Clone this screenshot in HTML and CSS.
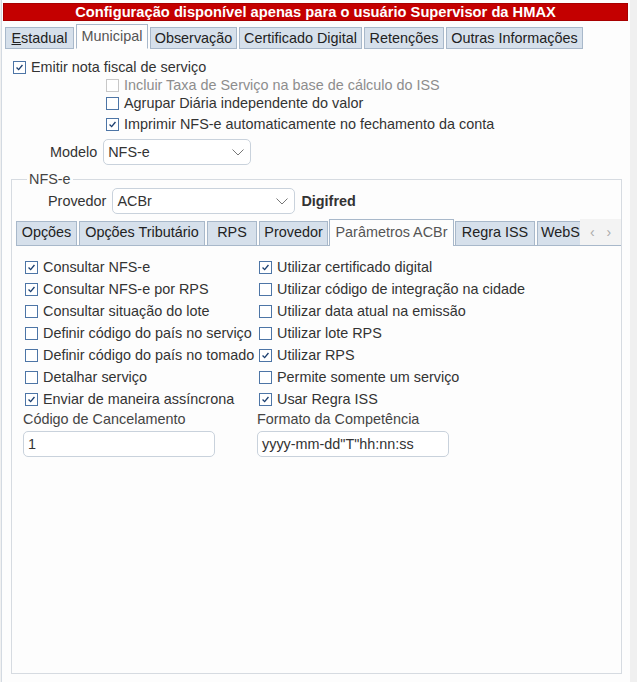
FILE: index.html
```html
<!DOCTYPE html>
<html lang="pt-BR">
<head>
<meta charset="utf-8">
<title>Configuração</title>
<link rel="stylesheet" href="styles.css">
</head>
<body>
<div class="app">
  <div class="panel">
    <div class="banner">Configuração disponível apenas para o usuário Supervisor da HMAX</div>
    <div class="tabs">
      <div class="tab t-est"><u>E</u>stadual</div>
      <div class="tab active t-mun">Municipal</div>
      <div class="tab t-obs">Observação</div>
      <div class="tab t-cert">Certificado Digital</div>
      <div class="tab t-ret">Retenções</div>
      <div class="tab t-out">Outras Informações</div>
    </div>
    <div class="page">
      <label class="chk row-emitir"><span class="box on"><svg viewBox="0 0 13 13"><path d="M3 6.5 L5.5 9 L10 3.5" /></svg></span>Emitir nota fiscal de serviço</label>
      <div class="sub">
        <label class="chk disabled"><span class="box"></span>Incluir Taxa de Serviço na base de cálculo do ISS</label>
        <label class="chk"><span class="box"></span>Agrupar Diária independente do valor</label>
        <label class="chk row-imprimir"><span class="box on"><svg viewBox="0 0 13 13"><path d="M3 6.5 L5.5 9 L10 3.5" /></svg></span>Imprimir NFS-e automaticamente no fechamento da conta</label>
      </div>
      <div class="modelo">
        <span class="lbl">Modelo</span>
        <div class="select sel-modelo"><span>NFS-e</span><svg class="chev" viewBox="0 0 12 7"><path d="M0.5 0.5 L6 6 L11.5 0.5" /></svg></div>
      </div>
      <fieldset class="group">
        <legend>NFS-e</legend>
        <div class="provedor">
          <span class="lbl">Provedor</span>
          <div class="select sel-prov"><span>ACBr</span><svg class="chev" viewBox="0 0 12 7"><path d="M0.5 0.5 L6 6 L11.5 0.5" /></svg></div>
          <b class="digi">Digifred</b>
        </div>
        <div class="itabs">
          <div class="itab i-op">Opções</div>
          <div class="itab i-trib">Opções Tributário</div>
          <div class="itab i-rps">RPS</div>
          <div class="itab i-prov">Provedor</div>
          <div class="itab active i-par">Parâmetros ACBr</div>
          <div class="itab i-reg">Regra ISS</div>
          <div class="itab clipped">WebS</div>
          <div class="arrows"><span>‹</span><span>›</span></div>
        </div>
        <div class="grid">
          <label class="chk"><span class="box on"><svg viewBox="0 0 13 13"><path d="M3 6.5 L5.5 9 L10 3.5" /></svg></span>Consultar NFS-e</label>
          <label class="chk"><span class="box on"><svg viewBox="0 0 13 13"><path d="M3 6.5 L5.5 9 L10 3.5" /></svg></span>Utilizar certificado digital</label>
          <label class="chk"><span class="box on"><svg viewBox="0 0 13 13"><path d="M3 6.5 L5.5 9 L10 3.5" /></svg></span>Consultar NFS-e por RPS</label>
          <label class="chk"><span class="box"></span>Utilizar código de integração na cidade</label>
          <label class="chk"><span class="box"></span>Consultar situação do lote</label>
          <label class="chk"><span class="box"></span>Utilizar data atual na emissão</label>
          <label class="chk"><span class="box"></span>Definir código do país no serviço</label>
          <label class="chk"><span class="box"></span>Utilizar lote RPS</label>
          <label class="chk"><span class="box"></span>Definir código do país no tomado</label>
          <label class="chk"><span class="box on"><svg viewBox="0 0 13 13"><path d="M3 6.5 L5.5 9 L10 3.5" /></svg></span>Utilizar RPS</label>
          <label class="chk"><span class="box"></span>Detalhar serviço</label>
          <label class="chk"><span class="box"></span>Permite somente um serviço</label>
          <label class="chk"><span class="box on"><svg viewBox="0 0 13 13"><path d="M3 6.5 L5.5 9 L10 3.5" /></svg></span>Enviar de maneira assíncrona</label>
          <label class="chk"><span class="box on"><svg viewBox="0 0 13 13"><path d="M3 6.5 L5.5 9 L10 3.5" /></svg></span>Usar Regra ISS</label>
        </div>
        <div class="fields">
          <div class="field">
            <div class="flbl">Código de Cancelamento</div>
            <div class="input">1</div>
          </div>
          <div class="field">
            <div class="flbl">Formato da Competência</div>
            <div class="input">yyyy-mm-dd"T"hh:nn:ss</div>
          </div>
        </div>
      </fieldset>
    </div>
  </div>
  <div class="side"></div>
</div>
</body>
</html>
```

FILE: styles.css
```css
* { box-sizing: border-box; }
html, body { margin: 0; padding: 0; }
body {
  font-family: "Liberation Sans", Arial, sans-serif;
  font-size: 14.4px;
  color: #333;
  background: #f0f0f0;
}
.app {
  display: flex;
  width: 637px;
  height: 682px;
  overflow: hidden;
}
.panel {
  margin-left: 1px;
  width: 629px;
  height: 682px;
  border-left: 1px solid #d3dae2;
  padding: 3px 2px 0 1px;
  background: #fdfdfd;
  display: flex;
  flex-direction: column;
}
.side { flex: 1; background: #f0f0f0; }

.banner {
  height: 18px;
  background: #c40000;
  color: #fff;
  font-weight: bold;
  font-size: 14.7px;
  text-align: center;
  line-height: 17px;
  border: 1px solid #a80000;
  white-space: nowrap;
}

.tabs {
  display: flex;
  align-items: flex-end;
  gap: 2px;
  margin-top: 3px;
  padding-left: 2px;
  height: 25px;
}
.tab {
  height: 22px;
  line-height: 20px;
  text-align: center;
  background: #d6e0eb;
  border: 1px solid #a8b8ca;
  color: #222;
  white-space: nowrap;
}
.tab.active {
  height: 25px;
  line-height: 22px;
  background: #fdfdfd;
  border-bottom-color: #fdfdfd;
  color: #555;
}
.t-est { width: 69px; }
.t-mun { width: 72px; }
.t-obs { width: 87px; }
.t-cert { width: 123px; }
.t-ret { width: 80px; }
.t-out { width: 137px; }

.page {
  flex: 1;
  display: flex;
  flex-direction: column;
}

.chk {
  display: flex;
  align-items: center;
  height: 18px;
  white-space: nowrap;
}
.box {
  width: 13px;
  height: 13px;
  border: 1px solid #4d75a6;
  background: #fff;
  margin-right: 5px;
  flex: none;
  display: flex;
}
.box svg { width: 11px; height: 11px; }
.box svg path { fill: none; stroke: #1c3f70; stroke-width: 1.6; }
.chk.disabled { color: #8d8d8d; }
.chk.disabled .box { border-color: #c8c8c8; }

.row-emitir { margin-top: 9px; padding-left: 10px; }
.sub { display: flex; flex-direction: column; padding-left: 103px; }
.row-imprimir { margin-top: 3px; }

.modelo {
  display: flex;
  align-items: center;
  margin-top: 6px;
  padding-left: 47px;
}
.lbl { margin-right: 6px; }
.select {
  height: 26px;
  border: 1px solid #c9d2dc;
  border-radius: 5px;
  background: #fff;
  display: flex;
  align-items: center;
  justify-content: space-between;
  padding: 0 6px 0 4px;
}
.sel-modelo { width: 148px; }
.sel-prov { width: 183px; margin-left: 0; }
.chev { width: 12px; height: 7px; }
.chev path { fill: none; stroke: #777; stroke-width: 1; }

.group {
  margin: 6px 0 0 8px;
  width: 611px;
  height: 503px;
  border: 1px solid #d6dbe1;
  padding: 0;
}
.group legend {
  margin-left: 15px;
  padding: 0 2px;
  line-height: 16px;
  color: #444;
}
.provedor {
  display: flex;
  align-items: center;
  margin-top: 1px;
  padding-left: 36px;
}
.digi { margin-left: 6px; color: #333; }

.itabs {
  display: flex;
  align-items: flex-end;
  gap: 2px;
  margin: 5px 0 0 4px;
  height: 27px;
  border-bottom: 1px solid #a8b8ca;
  width: 605px;
}
.itab {
  height: 24px;
  line-height: 21px;
  text-align: center;
  background: #d6e0eb;
  border: 1px solid #a8b8ca;
  border-bottom: none;
  color: #222;
  white-space: nowrap;
}
.i-op { width: 61px; }
.i-trib { width: 126px; }
.i-rps { width: 50px; }
.i-prov { width: 69px; }
.i-par { width: 125px; }
.i-reg { width: 80px; }
.itab.active {
  height: 27px;
  line-height: 24px;
  background: #fdfdfd;
  color: #555;
  margin: 0 -1px 0 -1px;
  position: relative;
  top: 1px;
}
.itab.clipped {
  width: 43px;
  text-align: left;
  padding: 0 0 0 3px;
  border-right: none;
}
.arrows {
  flex: 1;
  height: 26px;
  display: flex;
  align-items: center;
  justify-content: space-around;
  color: #aaa;
  font-size: 14px;
  background: #f3f3f3;
  margin-left: -2px;
  padding: 0 4px 0 4px;
}

.grid {
  display: grid;
  grid-template-columns: 234px 234px;
  grid-auto-rows: 22px;
  margin-top: 10px;
  padding-left: 11px;
}
.grid .chk { height: 22px; padding-left: 2px; }

.fields {
  display: grid;
  grid-template-columns: 234px 234px;
  padding-left: 11px;
}
.flbl { height: 18px; line-height: 18px; color: #444; }
.input {
  margin-top: 3px;
  width: 192px;
  height: 26px;
  border: 1px solid #c9d2dc;
  border-radius: 5px;
  background: #fff;
  line-height: 24px;
  padding-left: 4px;
  color: #333;
}
```
